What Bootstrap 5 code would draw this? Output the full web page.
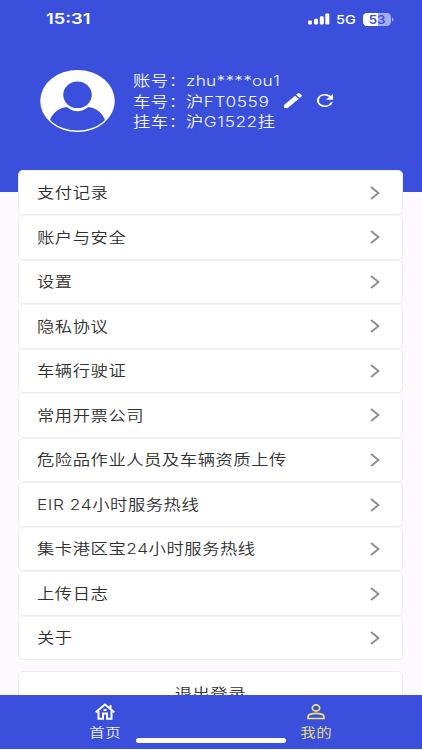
<!DOCTYPE html>
<html lang="zh-CN">
<head>
<meta charset="utf-8">
<meta name="viewport" content="width=device-width, initial-scale=1">
<title>我的</title>
<link href="https://cdn.jsdelivr.net/npm/bootstrap@5.3.0/dist/css/bootstrap.min.css" rel="stylesheet">
<style>
:root { --brand: #3a50dd; }
body { font-family: Inter, "Noto Sans CJK SC", sans-serif; font-size: 14.22px; font-weight: 350; letter-spacing: .45px; background: #fef9ff; color: #303030; }
.screen { width: 422px; height: 750px; }
.wide { display: inline-block; transform: scaleX(1.217); transform-origin: left center; white-space: nowrap; }
.wide-center { transform-origin: center; }
.hero { background: var(--brand); height: 192px; }
.status { height: 38px; padding: 0 28px 0 46px; }
.clock { font-size: 15px; font-weight: 600; letter-spacing: 0; }
.network { font-size: 12px; font-weight: 500; letter-spacing: 0; width: 22px; margin-top: 1px; margin-right: 1px; }
.bars { margin-right: 6px; }
.profile { padding: 33px 0 0 40px; }
.avatar { margin-top: -2px; }
.info { margin-left: 17.5px; line-height: 20.7px; color: #f3f4ff; }
.info-line { height: 20.7px; }
.label-col { width: 53.5px; }
.plate { width: 98px; }
.reload { margin-left: 15px; }
.account { letter-spacing: .2px; }
.menu { margin: -21.6px 19px 0 18px; }
.tile { height: 44.55px; padding: 0 22px 0 18.4px; background: #fff; border: 1px solid #ececf0; border-radius: 5px; border-top-color: #f3f3f6; }
.logout { height: 46px; margin: 10.5px 19px 0 18px; background: #fff; border: 1px solid #ececf0; border-radius: 5px; }
.tabs { height: 53.5px; bottom: 1.5px; background: var(--brand); }
.tab-item { padding-top: 8px; padding-right: 1px; color: #eef0ff; font-size: 12.7px; line-height: 18px; }
.tab-item .wide { margin-top: 3px; }
.tab-item.current { color: #f2e36a; }
.home-bar { width: 150px; height: 4.5px; bottom: 7.5px; left: 136px; background: #fff; }
</style>
<script src="https://cdn.jsdelivr.net/npm/bootstrap@5.3.0/dist/js/bootstrap.bundle.min.js"></script>
</head>
<body>
<div class="screen position-relative overflow-hidden">
  <header class="hero">
    <div class="status d-flex align-items-center text-white">
      <span class="wide clock me-auto">15:31</span>
      <svg class="bars" width="22" height="12" viewBox="0 0 22 12" fill="#fff"><rect x="0" y="7.5" width="4" height="4" rx="1.2"/><rect x="6" y="5.7" width="4" height="5.8" rx="1.2"/><rect x="11.8" y="3.2" width="4" height="8.3" rx="1.2"/><rect x="17.3" y=".5" width="4" height="11" rx="1.2"/></svg>
      <span class="wide network">5G</span>
      <svg class="ms-1" width="31" height="13" viewBox="0 0 31 13"><defs><clipPath id="cell"><rect width="28" height="13" rx="4.2"/></clipPath></defs><g clip-path="url(#cell)"><rect width="28" height="13" fill="#a5aff0"/><rect width="15" height="13" fill="#fff"/></g><path d="M29 4.5q1.5.5 1.5 2t-1.5 2z" fill="#a5aff0"/><text x="5.7" y="10.6" textLength="16.8" lengthAdjust="spacingAndGlyphs" font-family="Inter, sans-serif" font-size="11.5" font-weight="600" letter-spacing="0" fill="#3a50dd">53</text></svg>
    </div>
    <div class="profile d-flex align-items-start">
      <svg class="avatar" width="75" height="63" viewBox="0 0 75 63"><defs><clipPath id="face"><ellipse cx="37.5" cy="32" rx="36" ry="29.6"/></clipPath></defs><ellipse cx="37.5" cy="32" rx="37.3" ry="31" fill="#fff"/><g clip-path="url(#face)" fill="#3a50dd"><path d="M10 51C13 43 19 39 27 38Q37.500 46.500 48 38C56 39 62 43 65 51V63H10Z"/></g><ellipse cx="37.500" cy="26" rx="16.300" ry="15.500" fill="#fff"/><ellipse cx="37.500" cy="25.800" rx="14.300" ry="13.300" fill="#3a50dd"/></svg>
      <div class="info">
        <div class="info-line d-flex"><div class="label-col"><span class="wide">账号：</span></div><span class="wide account">zhu****ou1</span></div>
        <div class="info-line d-flex align-items-center"><div class="label-col"><span class="wide">车号：</span></div><div class="plate"><span class="wide">沪FT0559</span></div>
          <svg class="mb-1" width="18" height="15" viewBox="3 3 18 18" preserveAspectRatio="none" fill="#fff"><path d="M3 17.250V21h3.750L17.810 9.940l-3.750-3.750zM20.710 7.040a1 1 0 0 0 0-1.410l-2.340-2.340a1 1 0 0 0-1.410 0l-1.830 1.830 3.750 3.750z"/></svg>
          <svg class="reload mb-1" width="16" height="13" viewBox="4 4 16 16" preserveAspectRatio="none" fill="#fff"><path d="M17.650 6.350A8 8 0 1 0 19.730 14h-2.080A6 6 0 1 1 12 6c1.660 0 3.140.69 4.220 1.780L13 11h7V4z"/></svg>
        </div>
        <div class="info-line d-flex"><div class="label-col"><span class="wide">挂车：</span></div><span class="wide">沪G1522挂</span></div>
      </div>
    </div>
  </header>

  <svg class="d-none"><symbol id="chevron" viewBox="0 0 10 14"><path d="M1 1L8.500 7L1 13" fill="none" stroke="#8b8b8b" stroke-width="1.800"/></symbol></svg>
  <main>
    <div class="menu position-relative">
      <div class="tile d-flex align-items-center justify-content-between"><span class="wide">支付记录</span><svg width="10" height="14"><use href="#chevron"/></svg></div>
      <div class="tile d-flex align-items-center justify-content-between"><span class="wide">账户与安全</span><svg width="10" height="14"><use href="#chevron"/></svg></div>
      <div class="tile d-flex align-items-center justify-content-between"><span class="wide">设置</span><svg width="10" height="14"><use href="#chevron"/></svg></div>
      <div class="tile d-flex align-items-center justify-content-between"><span class="wide">隐私协议</span><svg width="10" height="14"><use href="#chevron"/></svg></div>
      <div class="tile d-flex align-items-center justify-content-between"><span class="wide">车辆行驶证</span><svg width="10" height="14"><use href="#chevron"/></svg></div>
      <div class="tile d-flex align-items-center justify-content-between"><span class="wide">常用开票公司</span><svg width="10" height="14"><use href="#chevron"/></svg></div>
      <div class="tile d-flex align-items-center justify-content-between"><span class="wide">危险品作业人员及车辆资质上传</span><svg width="10" height="14"><use href="#chevron"/></svg></div>
      <div class="tile d-flex align-items-center justify-content-between"><span class="wide">EIR 24小时服务热线</span><svg width="10" height="14"><use href="#chevron"/></svg></div>
      <div class="tile d-flex align-items-center justify-content-between"><span class="wide">集卡港区宝24小时服务热线</span><svg width="10" height="14"><use href="#chevron"/></svg></div>
      <div class="tile d-flex align-items-center justify-content-between"><span class="wide">上传日志</span><svg width="10" height="14"><use href="#chevron"/></svg></div>
      <div class="tile d-flex align-items-center justify-content-between"><span class="wide">关于</span><svg width="10" height="14"><use href="#chevron"/></svg></div>
    </div>
    <div class="logout d-flex align-items-center justify-content-center"><span class="wide wide-center">退出登录</span></div>
  </main>

  <nav class="tabs position-absolute start-0 end-0 d-flex">
    <div class="tab-item w-50 d-flex flex-column align-items-center">
      <svg width="20" height="18" viewBox="0 0 20 18" fill="none" stroke="#fff" stroke-width="2"><path d="M.7 9.200L10 1.500L19.300 9.200M3.500 8V15.700H8V10.500H12V15.700H16.500V8M15.500 2V5.500M8.500 7H11.500"/></svg>
      <span class="wide wide-center">首页</span>
    </div>
    <div class="tab-item current w-50 d-flex flex-column align-items-center">
      <svg width="18" height="18" viewBox="0 0 18 18" fill="none" stroke="#f2e36a" stroke-width="1.700"><ellipse cx="9" cy="5" rx="3.700" ry="3.100"/><path d="M1 15.500V13.500C1 11.500 5.500 10.300 9 10.300S17 11.500 17 13.500V15.500Z"/></svg>
      <span class="wide wide-center">我的</span>
    </div>
  </nav>
  <div class="home-bar position-absolute rounded-pill"></div>
</div>
</body>
</html>
